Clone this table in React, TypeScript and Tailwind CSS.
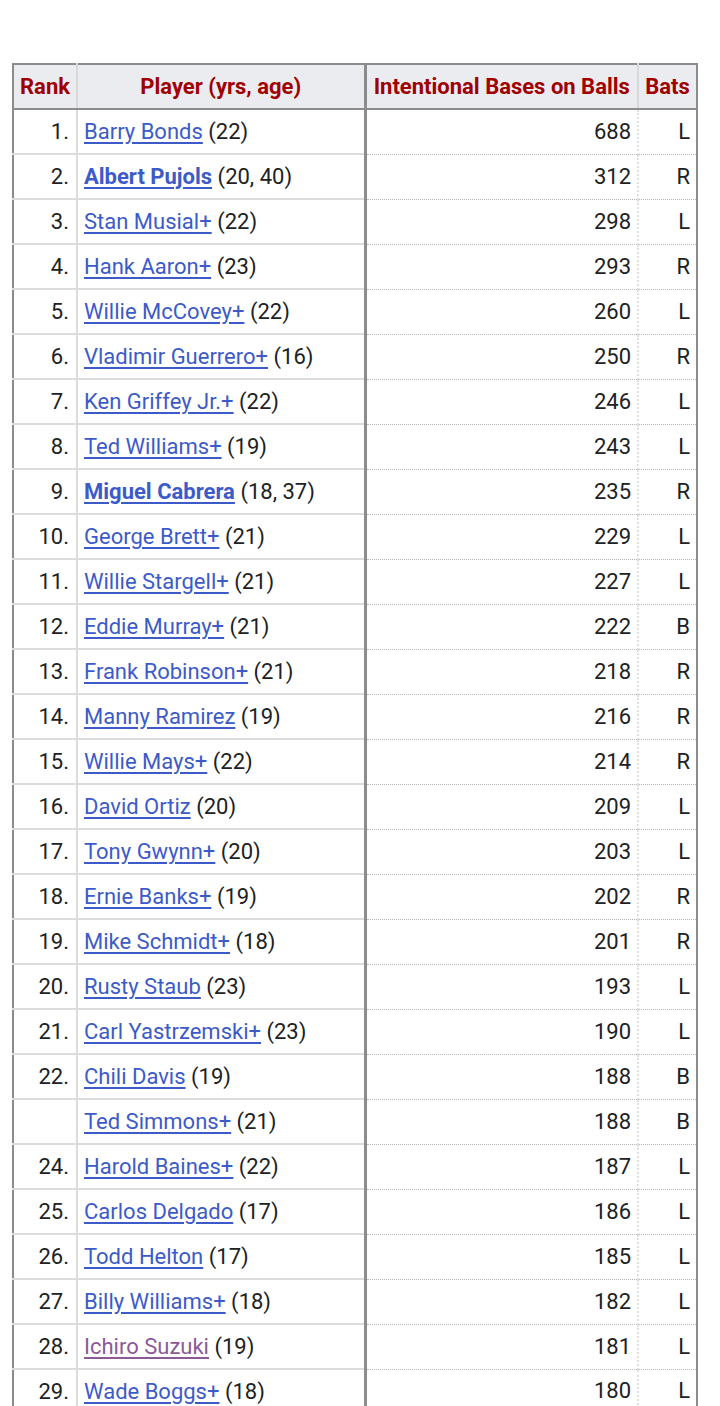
import React from "react";

type Row = {
  rank: string;
  name: string;
  extra: string;
  ibb: number;
  bats: string;
  bold?: boolean;
  visited?: boolean;
};

const rows: Row[] = [
  { rank: "1.", name: "Barry Bonds", extra: "(22)", ibb: 688, bats: "L" },
  { rank: "2.", name: "Albert Pujols", extra: "(20, 40)", ibb: 312, bats: "R", bold: true },
  { rank: "3.", name: "Stan Musial+", extra: "(22)", ibb: 298, bats: "L" },
  { rank: "4.", name: "Hank Aaron+", extra: "(23)", ibb: 293, bats: "R" },
  { rank: "5.", name: "Willie McCovey+", extra: "(22)", ibb: 260, bats: "L" },
  { rank: "6.", name: "Vladimir Guerrero+", extra: "(16)", ibb: 250, bats: "R" },
  { rank: "7.", name: "Ken Griffey Jr.+", extra: "(22)", ibb: 246, bats: "L" },
  { rank: "8.", name: "Ted Williams+", extra: "(19)", ibb: 243, bats: "L" },
  { rank: "9.", name: "Miguel Cabrera", extra: "(18, 37)", ibb: 235, bats: "R", bold: true },
  { rank: "10.", name: "George Brett+", extra: "(21)", ibb: 229, bats: "L" },
  { rank: "11.", name: "Willie Stargell+", extra: "(21)", ibb: 227, bats: "L" },
  { rank: "12.", name: "Eddie Murray+", extra: "(21)", ibb: 222, bats: "B" },
  { rank: "13.", name: "Frank Robinson+", extra: "(21)", ibb: 218, bats: "R" },
  { rank: "14.", name: "Manny Ramirez", extra: "(19)", ibb: 216, bats: "R" },
  { rank: "15.", name: "Willie Mays+", extra: "(22)", ibb: 214, bats: "R" },
  { rank: "16.", name: "David Ortiz", extra: "(20)", ibb: 209, bats: "L" },
  { rank: "17.", name: "Tony Gwynn+", extra: "(20)", ibb: 203, bats: "L" },
  { rank: "18.", name: "Ernie Banks+", extra: "(19)", ibb: 202, bats: "R" },
  { rank: "19.", name: "Mike Schmidt+", extra: "(18)", ibb: 201, bats: "R" },
  { rank: "20.", name: "Rusty Staub", extra: "(23)", ibb: 193, bats: "L" },
  { rank: "21.", name: "Carl Yastrzemski+", extra: "(23)", ibb: 190, bats: "L" },
  { rank: "22.", name: "Chili Davis", extra: "(19)", ibb: 188, bats: "B" },
  { rank: "", name: "Ted Simmons+", extra: "(21)", ibb: 188, bats: "B" },
  { rank: "24.", name: "Harold Baines+", extra: "(22)", ibb: 187, bats: "L" },
  { rank: "25.", name: "Carlos Delgado", extra: "(17)", ibb: 186, bats: "L" },
  { rank: "26.", name: "Todd Helton", extra: "(17)", ibb: 185, bats: "L" },
  { rank: "27.", name: "Billy Williams+", extra: "(18)", ibb: 182, bats: "L" },
  { rank: "28.", name: "Ichiro Suzuki", extra: "(19)", ibb: 181, bats: "L", visited: true },
  { rank: "29.", name: "Wade Boggs+", extra: "(18)", ibb: 180, bats: "L" },
];

export default function App() {
  return (
    <div className="bg-white min-h-screen pt-[63px] pl-[12px] font-['Roboto','Liberation_Sans',sans-serif] text-[22px] leading-[26px] text-[#202122]">
      <table className="w-[684px] table-fixed border-collapse border-2 border-[#8c8c8c]">
        <colgroup>
          <col className="w-[64px]" />
          <col className="w-[288px]" />
          <col className="w-[273px]" />
          <col className="w-[59px]" />
        </colgroup>
        <thead>
          <tr className="h-[45px] bg-[#eaecf0] text-[#a00000] font-bold">
            <th className="border-b-2 border-r-2 border-[#8c8c8c] border-r-[#d8d8d8] px-[4px] text-center">Rank</th>
            <th className="border-b-2 border-r-[3px] border-[#8c8c8c] px-[4px] text-center">Player (yrs, age)</th>
            <th className="border-b-2 border-r-2 border-[#8c8c8c] border-r-[#d8d8d8] px-[4px] text-center whitespace-nowrap">Intentional Bases on Balls</th>
            <th className="border-b-2 border-[#8c8c8c] px-[4px] text-center">Bats</th>
          </tr>
        </thead>
        <tbody>
          {rows.map((r, i) => (
            <tr key={i} className="h-[45px]">
              <td className="border-b-2 border-r-2 border-[#dcdcdc] pr-[7px] text-right">{r.rank}</td>
              <td className="border-b-2 border-r-[3px] border-[#dcdcdc] border-r-[#8c8c8c] pl-[6px] whitespace-nowrap">
                <a
                  href="#"
                  className={`underline underline-offset-[3px] ${r.visited ? "text-[#8b5a96]" : "text-[#3c5bc8]"} ${r.bold ? "font-bold" : ""}`}
                >
                  {r.name}
                </a>{" "}
                {r.extra}
              </td>
              <td className="border-b border-dotted border-[#b8b8b8] border-r-2 border-r-solid border-r-[#e0e0e0] pr-[6px] text-right">
                {r.ibb}
              </td>
              <td className="border-b border-dotted border-[#b8b8b8] pr-[6px] text-right">{r.bats}</td>
            </tr>
          ))}
        </tbody>
      </table>
    </div>
  );
}
